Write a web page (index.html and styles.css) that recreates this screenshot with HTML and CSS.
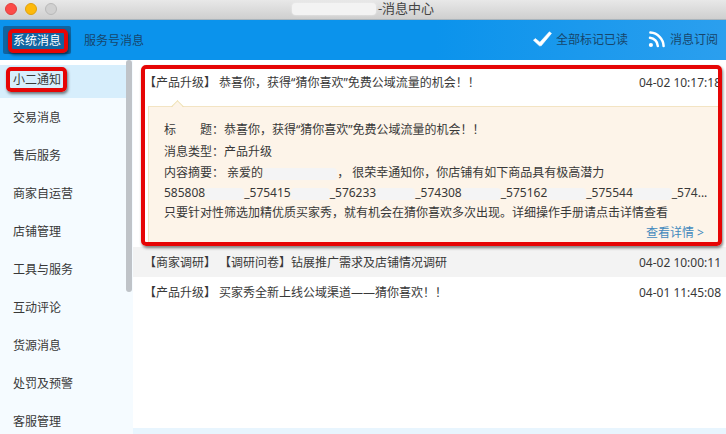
FILE: index.html
```html
<!DOCTYPE html>
<html lang="zh-CN">

<head>
    <meta charset="UTF-8">
    <meta name="viewport" content="width=device-width, initial-scale=1.0">
    <title>消息中心</title>
    <link rel="stylesheet" href="styles.css">
</head>

<body>
    <div class="titlebar">
        <div class="window-buttons">
            <button class="dot dot-close" aria-label="关闭"></button>
            <button class="dot dot-min" aria-label="最小化"></button>
            <button class="dot dot-max" aria-label="最大化"></button>
        </div>
        <h1 class="window-title"><span class="mask mask-title"></span>-消息中心</h1>
    </div>

    <header class="header">
        <nav class="tabs">
            <button class="tab active marked">系统消息</button>
            <button class="tab">服务号消息</button>
        </nav>
        <div class="actions">
            <button class="action">
                <svg class="icon" width="20" height="18" viewBox="0 0 20 18">
                    <path d="M1.4 9.2 L3.4 7.6 L7.9 11.2 L17.4 0.8 L19.5 2.4 L9.2 14.8 L7.4 14.8 Z" fill="#fff" stroke="#fff" stroke-width="0.6" stroke-linejoin="round" />
                </svg>
                全部标记已读
            </button>
            <button class="action">
                <svg class="icon" width="18" height="18" viewBox="0 0 18 18">
                    <circle cx="2.9" cy="14" r="2.1" fill="#fff" />
                    <path d="M2 6.8 A8.6 8.6 0 0 1 9.8 15 M2.4 1.6 A14 14 0 0 1 15.6 15" fill="none" stroke="#fff" stroke-width="2.5" stroke-linecap="round" />
                </svg>
                消息订阅
            </button>
        </div>
    </header>

    <div class="content">
        <nav class="sidebar">
            <div class="menu">
                <a href="#" class="menu-item active marked">小二通知</a>
                <a href="#" class="menu-item">交易消息</a>
                <a href="#" class="menu-item">售后服务</a>
                <a href="#" class="menu-item">商家自运营</a>
                <a href="#" class="menu-item">店铺管理</a>
                <a href="#" class="menu-item">工具与服务</a>
                <a href="#" class="menu-item">互动评论</a>
                <a href="#" class="menu-item">货源消息</a>
                <a href="#" class="menu-item">处罚及预警</a>
                <a href="#" class="menu-item">客服管理</a>
            </div>
            <div class="scroll"></div>
        </nav>

        <main class="messages">
            <article class="message-open">
                <div class="message">
                    <span>【产品升级】 恭喜你，获得“猜你喜欢”免费公域流量的机会！！</span>
                    <time>04-02 10:17:18</time>
                </div>
                <div class="detail">
                    <p class="field">标&#12288;&#12288;题：恭喜你，获得“猜你喜欢”免费公域流量的机会！！</p>
                    <p class="field">消息类型：产品升级</p>
                    <p>内容摘要： 亲爱的<span class="mask mask-name"></span>， 很荣幸通知你，你店铺有如下商品具有极高潜力</p>
                    <p class="ids">585808<span class="mask mask-id"></span>_575415<span class="mask mask-id"></span>_576233<span class="mask mask-id"></span>_574308<span class="mask mask-id"></span>_575162<span class="mask mask-id"></span>_575544<span class="mask mask-id"></span>_574...</p>
                    <p>只要针对性筛选加精优质买家秀，就有机会在猜你喜欢多次出现。详细操作手册请点击详情查看</p>
                    <p class="more"><a href="#">查看详情 &gt;</a></p>
                </div>
            </article>
            <div class="message gray">
                <span>【商家调研】 【调研问卷】钻展推广需求及店铺情况调研</span>
                <time>04-02 10:00:11</time>
            </div>
            <div class="message">
                <span>【产品升级】 买家秀全新上线公域渠道——猜你喜欢！！</span>
                <time>04-01 11:45:08</time>
            </div>
            <div class="bottom"></div>
        </main>
    </div>
</body>

</html>
```

FILE: styles.css
```css
*,
*::before,
*::after {
    margin: 0;
    padding: 0;
    box-sizing: border-box;
}

body {
    display: flex;
    flex-direction: column;
    height: 100vh;
    overflow: hidden;
    background-color: #fff;
    color: #383838;
    font-family: "Noto Sans", "Noto Sans CJK SC", sans-serif;
    font-size: 12px;
    text-spacing-trim: space-all;
}

button {
    border: none;
    background: none;
    color: inherit;
    font: inherit;
    cursor: pointer;
}

a {
    color: inherit;
    text-decoration: none;
}

/* barra de la ventana */
.titlebar {
    display: grid;
    grid-template-columns: 1fr auto 1fr;
    align-items: start;
    height: 20px;
    flex-shrink: 0;
    background: linear-gradient(#e8e8e8, #cfcfcf);
    border-bottom: 1px solid #a9b4bc;
}

.window-buttons {
    display: flex;
    gap: 8px;
    padding: 3px 0 0 5px;
}

.dot {
    width: 12px;
    height: 12px;
    border-radius: 50%;
}

.dot-close {
    background-color: #fc4b48;
    border: 1px solid #e0403d;
}

.dot-min {
    background-color: #fdb90b;
    border: 1px solid #e0a10c;
}

.dot-max {
    background-color: #d0d0d0;
    border: 1px solid #b9b9b9;
}

.window-title {
    display: flex;
    align-items: center;
    gap: 2px;
    font-size: 13px;
    font-weight: normal;
    line-height: 17px;
    color: #444;
}

.mask {
    display: inline-block;
    height: 12px;
    border-radius: 4px;
    background-color: #f4f4f5;
    vertical-align: middle;
}

.mask-title {
    width: 84px;
    background-color: #f3f3f3;
    box-shadow: 0 0 2px #f3f3f3;
}

.mask-name {
    width: 74px;
}

.mask-id {
    width: 39px;
}

.header {
    display: flex;
    justify-content: space-between;
    align-items: center;
    height: 40px;
    flex-shrink: 0;
    padding: 0 8px 0 3px;
    background: linear-gradient(to right, #0b93ec 60%, #2b9fee);
    color: #17466c;
}

.tabs {
    display: flex;
    gap: 3px;
}

.tab {
    height: 28px;
    padding: 2px 10px 0;
    border-radius: 2px;
    line-height: 26px;
}

.tab.active {
    background-color: #1064a0;
    color: #fff;
}

.actions {
    display: flex;
    gap: 20px;
}

.action {
    display: flex;
    align-items: center;
    gap: 4px;
    line-height: 20px;
}

/* marcos rojos */
.marked,
.message-open {
    position: relative;
}

.marked::after,
.message-open::after {
    content: "";
    position: absolute;
    border: 4px solid #e60505;
    border-radius: 5px;
    box-shadow: 1px 2px 3px rgba(0, 0, 0, 0.5);
    pointer-events: none;
}

.tab.marked::after {
    inset: 3px 3px 1px 5px;
}

.menu-item.marked::after {
    left: 6px;
    top: 2px;
    width: 61px;
    height: 25px;
}

.message-open::after {
    inset: -2px 4px 1px 8px;
}

.content {
    display: flex;
    flex: 1;
    min-height: 0;
}

.sidebar {
    display: flex;
    width: 133px;
    flex-shrink: 0;
    background-color: #f5fbff;
    overflow: hidden;
}

.menu {
    flex: 1;
    border-top: 5px solid #fff;
}

.menu-item {
    display: block;
    height: 33px;
    margin-bottom: 5px;
    padding-left: 13px;
    line-height: 30px;
}

.menu-item.active {
    background-color: #d7eefc;
}

.scroll {
    width: 6px;
    height: 232px;
    margin-right: 1px;
    border-radius: 3px;
    background-color: #bfc3c8;
}

.messages {
    display: flex;
    flex-direction: column;
    flex: 1;
    min-width: 0;
    padding-top: 7px;
}

.message {
    display: flex;
    justify-content: space-between;
    padding: 2px 5px 0 11px;
    line-height: 28px;
    white-space: nowrap;
}

.message.gray {
    background-color: #f3f3f3;
}

.message-open {
    padding-bottom: 4px;
}

.detail {
    position: relative;
    margin: 9px 6px 0 15px;
    padding: 12px 15px 0;
    border: 1px solid #f3e4c3;
    border-bottom: none;
    background-color: #fdf4e9;
    line-height: 20px;
    white-space: nowrap;
}

.detail::before {
    content: "";
    position: absolute;
    left: 24px;
    top: -5px;
    width: 9px;
    height: 9px;
    border-left: 1px solid #efe0b0;
    border-top: 1px solid #efe0b0;
    background: linear-gradient(135deg, #fdf4e9 50%, transparent 50%);
    transform: rotate(45deg);
}

.field {
    line-height: 22px;
}

.more {
    text-align: right;
    color: #4389bd;
}

.bottom {
    height: 6px;
    margin-top: auto;
    background-color: #e8f5fe;
}
```
